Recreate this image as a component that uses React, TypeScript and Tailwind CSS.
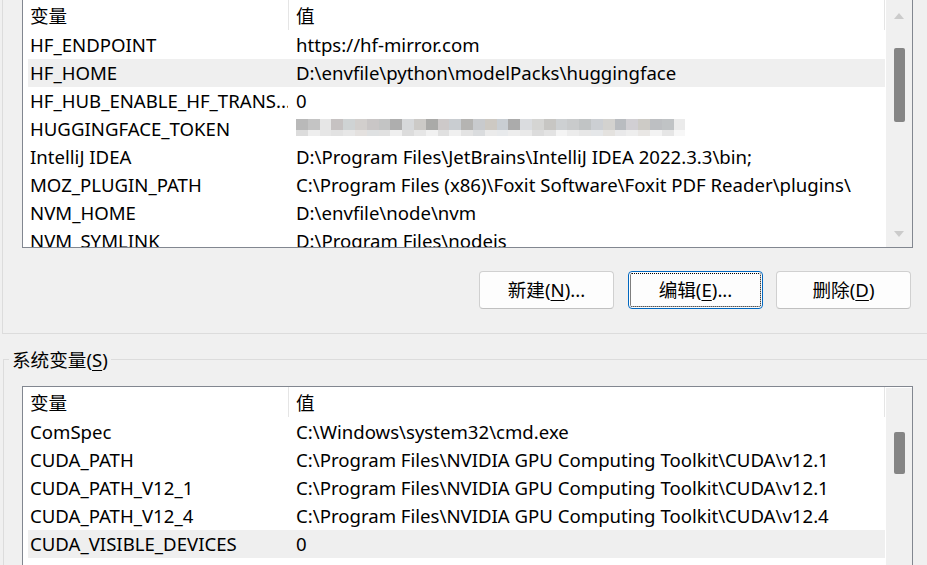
import React from "react";

type Row = { name: string; value?: string; hl?: boolean; mosaic?: boolean };

const userRows: Row[] = [
  { name: "HF_ENDPOINT", value: "https://hf-mirror.com" },
  { name: "HF_HOME", value: "D:\\envfile\\python\\modelPacks\\huggingface", hl: true },
  { name: "HF_HUB_ENABLE_HF_TRANS...", value: "0" },
  { name: "HUGGINGFACE_TOKEN", mosaic: true },
  { name: "IntelliJ IDEA", value: "D:\\Program Files\\JetBrains\\IntelliJ IDEA 2022.3.3\\bin;" },
  { name: "MOZ_PLUGIN_PATH", value: "C:\\Program Files (x86)\\Foxit Software\\Foxit PDF Reader\\plugins\\" },
  { name: "NVM_HOME", value: "D:\\envfile\\node\\nvm" },
  { name: "NVM_SYMLINK", value: "D:\\Program Files\\nodejs" },
];

const sysRows: Row[] = [
  { name: "ComSpec", value: "C:\\Windows\\system32\\cmd.exe" },
  { name: "CUDA_PATH", value: "C:\\Program Files\\NVIDIA GPU Computing Toolkit\\CUDA\\v12.1" },
  { name: "CUDA_PATH_V12_1", value: "C:\\Program Files\\NVIDIA GPU Computing Toolkit\\CUDA\\v12.1" },
  { name: "CUDA_PATH_V12_4", value: "C:\\Program Files\\NVIDIA GPU Computing Toolkit\\CUDA\\v12.4" },
  { name: "CUDA_VISIBLE_DEVICES", value: "0", hl: true },
  { name: "DriverData", value: "C:\\Windows\\System32\\Drivers\\DriverData" },
];

const topShades = [
  "#b9b9b9", "#c4c4c4", "#e6e6e6", "#c6c2c2", "#cfd3d4", "#d2cfcd", "#c9c6c6", "#c3c4c4",
  "#aeaeae", "#d6d8da", "#cccac7", "#aaaaa8", "#cdc9c9", "#c9cdd1", "#b5b4b2", "#c8cacd",
  "#cdc9c3", "#c9ced3", "#ababab", "#dadcdf", "#d5d5d3", "#c7c6c3", "#cdd0d2", "#c9cbcc",
  "#c1c4c5", "#cccfd3", "#d3d2cf", "#b9bcc0", "#d1cfd3", "#cdcbc6", "#bdbfc2", "#c0c3c5", "#ebebeb",
];
const botShades = [
  "#dcdcdc", "#eeeeee", "#e6e6e6", "#e2e2e2", "#e7e7e7", "#e4e1df", "#dfe1e2", "#e1e1e1",
  "#efefef", "#dcdcdc", "#e6e6e6", "#f1f1f1", "#e0e0e0", "#f0f0f0", "#e3e3e3", "#dadcde",
  "#ebebeb", "#e8eaec", "#ededed", "#e9e9e9", "#dcdcdc", "#e3e3e3", "#f4f4f4", "#ececec",
  "#e7e7e7", "#e5e7e9", "#e4e2df", "#e9e9ea", "#eeeeee", "#e9e7e5", "#f3f3f3", "#e6e6e6", "#f7f7f7",
];

function Mosaic() {
  return (
    <div className="flex flex-col pt-[4px] h-[28px]">
      <div className="flex">
        {topShades.map((c, i) => (
          <div key={i} className="w-[11.8px] h-[11px]" style={{ backgroundColor: c }} />
        ))}
      </div>
      <div className="flex">
        {botShades.map((c, i) => (
          <div key={i} className="w-[11.8px] h-[6px]" style={{ backgroundColor: c }} />
        ))}
      </div>
    </div>
  );
}

function ListBox({ rows, heightClass, arrows, thumbTop, thumbH }: { rows: Row[]; heightClass: string; arrows: boolean; thumbTop: string; thumbH: string }) {
  return (
    <div className={`flex w-[891px] ${heightClass} border border-[#828790] bg-white overflow-hidden`}>
      <div className="w-[863px] pl-[5px] flex flex-col">
        <div className="flex h-[31px] w-[857px] items-center leading-[31px]">
          <div className="w-[260px] pl-[2px]">变量</div>
          <div className="flex-1 h-[30px] self-start border-l border-r border-[#e5e5e5] pl-[7px] flex items-center">值</div>
        </div>
        {rows.map((r, i) => (
          <div key={i} className={`flex h-[28px] w-[857px] leading-[28px] shrink-0 ${r.hl ? "bg-[#efefef]" : ""}`}>
            <div className="w-[260px] pl-[2px] whitespace-nowrap overflow-hidden">{r.name}</div>
            <div className="flex-1 pl-[8px] whitespace-nowrap overflow-hidden">
              {r.mosaic ? <Mosaic /> : r.value}
            </div>
          </div>
        ))}
      </div>
      <div className={`w-[26px] bg-[#f0f0f0] flex flex-col items-center ${arrows ? "" : "mt-[1px]"}`}>
        {arrows ? (
          <div className="h-[31px] flex items-center justify-center">
            <svg width="10" height="6" viewBox="0 0 10 6"><path d="M0 6 L5 0 L10 6 Z" fill="#cbcbcb" /></svg>
          </div>
        ) : null}
        <div className={`w-[11px] ${thumbTop} ${thumbH} bg-[#858585] rounded-[2px]`} />
        {arrows ? (
          <div className="mt-auto h-[26px] flex items-center justify-center">
            <svg width="10" height="6" viewBox="0 0 10 6"><path d="M0 0 L5 6 L10 0 Z" fill="#cbcbcb" /></svg>
          </div>
        ) : null}
      </div>
    </div>
  );
}

function Btn({ label, mn, rest, focus }: { label: string; mn: string; rest: string; focus?: boolean }) {
  return (
    <div
      className={`relative w-[135px] h-[38px] rounded-[4px] bg-[#fdfdfd] flex items-center justify-center border ${
        focus ? "border-[#0067c0]" : "border-[#d0d0d0] border-b-[#c0c0c0]"
      }`}
    >
      {focus ? <div className="absolute inset-[1px] border border-dotted border-black rounded-[2px]" /> : null}
      <span className="leading-[24px]">
        {label}(<span className="underline underline-offset-[3px]">{mn}</span>){rest}
      </span>
    </div>
  );
}

export default function App() {
  return (
    <div className="w-[927px] h-[565px] overflow-hidden bg-[#f0f0f0] text-black text-[18.6px] font-['Noto_Sans','Noto_Sans_CJK_SC',sans-serif]">
      <div className="ml-[2px] h-[334px] border-l border-b border-[#dcdcdc] flex flex-col">
        <div className="mt-[-1px] ml-[19px]">
          <ListBox rows={userRows} heightClass="h-[249px]" arrows thumbTop="mt-[17px]" thumbH="h-[74px]" />
        </div>
        <div className="mt-[23px] ml-[476px] flex">
          <Btn label="新建" mn="N" rest="..." />
          <div className="ml-[14px]">
            <Btn label="编辑" mn="E" rest="..." focus />
          </div>
          <div className="ml-[13px]">
            <Btn label="删除" mn="D" rest="" />
          </div>
        </div>
      </div>
      <div className="relative mt-[25px] ml-[3px] border-l border-t border-[#dcdcdc] h-[300px]">
        <div className="absolute top-[-13px] left-[5px] px-[3px] bg-[#f0f0f0] leading-[26px]">
          系统变量(<span className="underline underline-offset-[3px]">S</span>)
        </div>
        <div className="mt-[26px] ml-[18px]">
          <ListBox rows={sysRows} heightClass="h-[200px]" arrows={false} thumbTop="mt-[44px]" thumbH="h-[42px]" />
        </div>
      </div>
    </div>
  );
}
